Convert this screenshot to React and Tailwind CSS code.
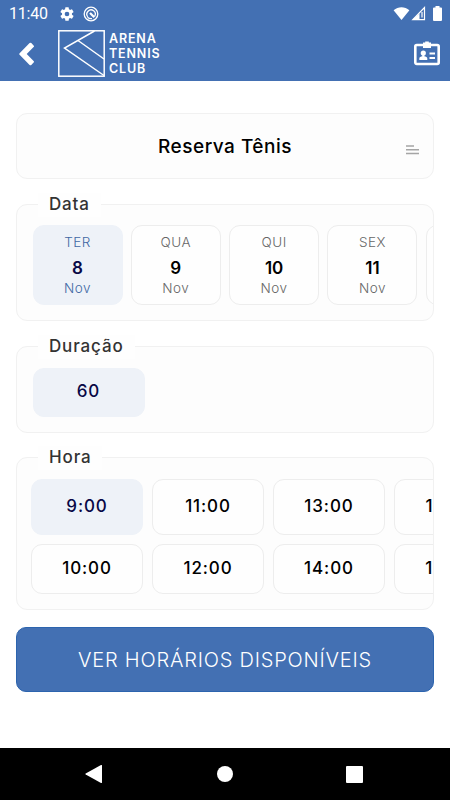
import React from "react";

const days = [
  { week: "TER", day: "8", month: "Nov", selected: true },
  { week: "QUA", day: "9", month: "Nov" },
  { week: "QUI", day: "10", month: "Nov" },
  { week: "SEX", day: "11", month: "Nov" },
  { week: "", day: "", month: "" },
];

const hours = [
  ["9:00", "11:00", "13:00", "15:00"],
  ["10:00", "12:00", "14:00", "16:00"],
];

const StatusBar = () => (
  <div className="h-[27px] pl-[9px] pr-2 flex items-center justify-between">
    <div className="flex items-center">
      <span className="w-[39px] font-[Roboto] text-[16px] leading-none tracking-[-0.2px]">
        11:40
      </span>
      <svg className="ml-[11px] w-4 h-4" viewBox="0 0 24 24" fill="currentColor">
        <path d="M19.4 13a7.500 7.500 0 0 0 0-2l2.200-1.700a.5.5 0 0 0 .1-.6l-2-3.500a.5.5 0 0 0-.6-.2l-2.500 1a7.300 7.300 0 0 0-1.700-1l-.4-2.600a.5.5 0 0 0-.5-.4h-4a.5.5 0 0 0-.5.4L9.100 5a7.700 7.700 0 0 0-1.700 1l-2.500-1a.5.5 0 0 0-.6.2l-2 3.500a.5.5 0 0 0 .1.6L4.600 11a8 8 0 0 0 0 2l-2.200 1.700a.5.5 0 0 0-.1.600l2 3.500c.1.200.4.300.6.200l2.500-1a7.300 7.300 0 0 0 1.700 1l.4 2.600c0 .2.200.4.5.4h4c.3 0 .5-.2.5-.4l.4-2.600a7.700 7.700 0 0 0 1.700-1l2.500 1c.2.1.5 0 .6-.2l2-3.500a.5.5 0 0 0-.1-.6L19.400 13ZM12 15.500a3.500 3.500 0 1 1 0-7 3.500 3.500 0 0 1 0 7Z" />
      </svg>
      <svg className="ml-2 w-4 h-4" viewBox="0 0 16 16" fill="none" stroke="currentColor">
        <circle cx="8" cy="8" r="6.800" strokeWidth="1.300" />
        <path d="M4.800 10.800a4.200 4.200 0 1 1 6.800-.4" strokeWidth="1.300" />
        <path d="M7 7l4.300 4.300" strokeWidth="2.200" />
        <path d="M4.500 11.300q2 1.700 4.500 1.300" strokeWidth="1.200" />
      </svg>
    </div>
    <div className="flex items-center">
      <svg className="w-[17px] h-[15px]" viewBox="0 0 17 15" fill="currentColor">
        <path d="M.6 4.200C5.300.2 11.700.2 16.400 4.200L8.500 14Z" />
      </svg>
      <svg className="ml-px w-[15px] h-[15px]" viewBox="0 0 15 15">
        <path d="M1.800 13.600H13.500V1.500Z" fill="none" stroke="currentColor" strokeWidth="1.200" />
        <path d="M8.500 7.500V13.600H1.500Z" fill="currentColor" />
        <path d="M11 6v5.500" stroke="currentColor" strokeWidth="1.200" />
      </svg>
      <svg className="ml-[7px] w-[9px] h-[15px]" viewBox="0 0 9 15" fill="currentColor">
        <path d="M2.500 0h4v1.600H8a1 1 0 0 1 1 1V14a1 1 0 0 1-1 1H1a1 1 0 0 1-1-1V2.600a1 1 0 0 1 1-1h1.500Z" />
      </svg>
    </div>
  </div>
);

const Header = () => (
  <div className="h-[54px] pl-[19px] pr-[9px] flex items-start justify-between">
    <div className="flex items-start">
      <svg className="mt-[15px] w-4 h-6" viewBox="0 0 16 24" fill="currentColor">
        <path d="M.6 11.200 10.600 1.100a1.200 1.200 0 0 1 1.700 0l2.300 2.300a1.200 1.200 0 0 1 0 1.700L7.700 12l6.900 6.900a1.200 1.200 0 0 1 0 1.700l-2.300 2.300a1.200 1.200 0 0 1-1.700 0L.6 12.800a1.200 1.200 0 0 1 0-1.600Z" />
      </svg>
      <svg
        className="mt-[3px] ml-[23px] w-[47px] h-[47px]"
        viewBox="0 0 47 47"
        fill="none"
        stroke="currentColor"
        strokeWidth="1.500"
      >
        <rect x="0.800" y="0.800" width="45.400" height="45.400" />
        <path d="M36.500 1 6.500 18 46 45.500" />
        <path d="M20 10.500 46 29" />
      </svg>
      <div className="mt-[4px] ml-1 text-[12.500px] leading-[15px] font-semibold tracking-[0.850px]">
        <div>ARENA</div>
        <div>TENNIS</div>
        <div>CLUB</div>
      </div>
    </div>
    <svg className="mt-[14px] w-7 h-[25px]" viewBox="0 0 28 25">
      <rect x="2.300" y="4" width="23.400" height="19" rx="1.500" fill="none" stroke="currentColor" strokeWidth="2.600" />
      <path d="M10 1.500h2.200V.5h3.600v1H18V7h-8Z" fill="currentColor" />
      <circle cx="10.300" cy="12" r="2.600" fill="currentColor" />
      <path d="M6.300 19v-1.500c0-1.500 1.500-2 3-2.300V13h2v2.200c1.500.3 3 .8 3 2.300V19Z" fill="currentColor" />
      <path d="M16.500 12.500H22M16.500 17H22" stroke="currentColor" strokeWidth="2.200" />
    </svg>
  </div>
);

const Field = ({ label, className, children }) => (
  <section
    className={`relative border border-[#f1f1f1] rounded-[11px] bg-[#fdfdfd] ${className}`}
  >
    <h2 className="absolute -top-3 left-[21px] h-6 px-[11px] bg-[#fefefe] text-[17px] leading-[23px] font-medium tracking-[0.850px] text-[#333]">
      {label}
    </h2>
    {children}
  </section>
);

const DayCard = ({ item }) => (
  <button
    className={`shrink-0 w-[90px] h-20 flex flex-col items-center rounded-[11px] border pt-[7px] text-[13.500px] font-light ${
      item.selected
        ? "bg-[#eef2f8] border-[#eef2f8] text-[#4168a4]"
        : "bg-[#fefefe] border-[#ededed] text-[#666]"
    }`}
  >
    <span className="leading-[18px] tracking-[0.5px]">{item.week}</span>
    <span
      className={`mt-[7px] text-[17px] leading-5 font-semibold ${
        item.selected ? "text-[#080846]" : "text-black"
      }`}
    >
      {item.day}
    </span>
    <span className="mt-px leading-[18px] tracking-[0.5px]">{item.month}</span>
  </button>
);

const TimeButton = ({ selected, className, children }) => (
  <button
    className={`shrink-0 w-[112px] flex items-center justify-center rounded-[11px] border text-[17px] font-medium tracking-[0.9px] ${
      selected
        ? "bg-[#eef2f8] border-[#eef2f8] text-[#080846]"
        : "bg-[#fefefe] border-[#ededed] text-black"
    } ${className}`}
  >
    {children}
  </button>
);

const NavBar = () => (
  <nav className="h-[52px] flex items-center justify-between pl-[85px] pr-[87px] bg-black text-white">
    <svg className="w-[18px] h-[18px]" viewBox="0 0 18 18" fill="currentColor">
      <path d="M.7 8.400 16 0q1-.3 1 .8v16.400q0 1.100-1 .8L.7 9.600Q0 9 .7 8.400Z" />
    </svg>
    <span className="w-4 h-4 rounded-full bg-white" />
    <span className="w-[17px] h-[17px] rounded-[1px] bg-white" />
  </nav>
);

const App = () => (
  <div className="w-[450px] h-[800px] flex flex-col overflow-hidden bg-white font-['Inter','Liberation_Sans',sans-serif]">
    <header className="h-[81px] shrink-0 bg-[#4370b3] text-white">
      <StatusBar />
      <Header />
    </header>

    <main className="flex-1 flex flex-col pt-8 px-4">
      <div className="h-[66px] grid grid-cols-[1fr_auto_1fr] items-center border border-[#f1f1f1] rounded-[11px] bg-[#fdfdfd]">
        <h1 className="col-start-2 pt-[2px] text-[19px] font-medium tracking-[0.5px] text-black">
          Reserva Tênis
        </h1>
        <svg
          className="justify-self-end mt-[6px] mr-[14px] w-[13px] h-[11px]"
          viewBox="0 0 13 11"
          stroke="#a5a5a5"
          strokeWidth="1.500"
        >
          <path d="M0 2h8M0 5.700h13M0 9.500h13" />
        </svg>
      </div>

      <Field label="Data" className="mt-[25px] h-[117px]">
        <div className="flex gap-[8.300px] pt-[20px] pl-[15.500px] overflow-hidden">
          {days.map((item, i) => (
            <DayCard key={i} item={item} />
          ))}
        </div>
      </Field>

      <Field label="Duração" className="mt-[25px] h-[87px]">
        <div className="pt-[20.500px] pl-[15.500px]">
          <TimeButton selected className="h-[49px]">
            60
          </TimeButton>
        </div>
      </Field>

      <Field label="Hora" className="mt-[24px] h-[153px]">
        <div className="flex flex-col gap-[9px] pt-[21px] pl-[14px] overflow-hidden">
          {hours.map((row, i) => (
            <div key={i} className="flex gap-[9px]">
              {row.map((hour) => (
                <TimeButton
                  key={hour}
                  selected={hour === "9:00"}
                  className={i === 0 ? "h-14" : "h-[50px]"}
                >
                  {hour}
                </TimeButton>
              ))}
            </div>
          ))}
        </div>
      </Field>

      <button className="mt-[17px] h-[65px] rounded-[10px] border border-[#2c64ae] bg-[#4370b3] text-[20px] font-light tracking-[0.8px] text-white">
        VER HORÁRIOS DISPONÍVEIS
      </button>
    </main>

    <NavBar />
  </div>
);

export default App;
